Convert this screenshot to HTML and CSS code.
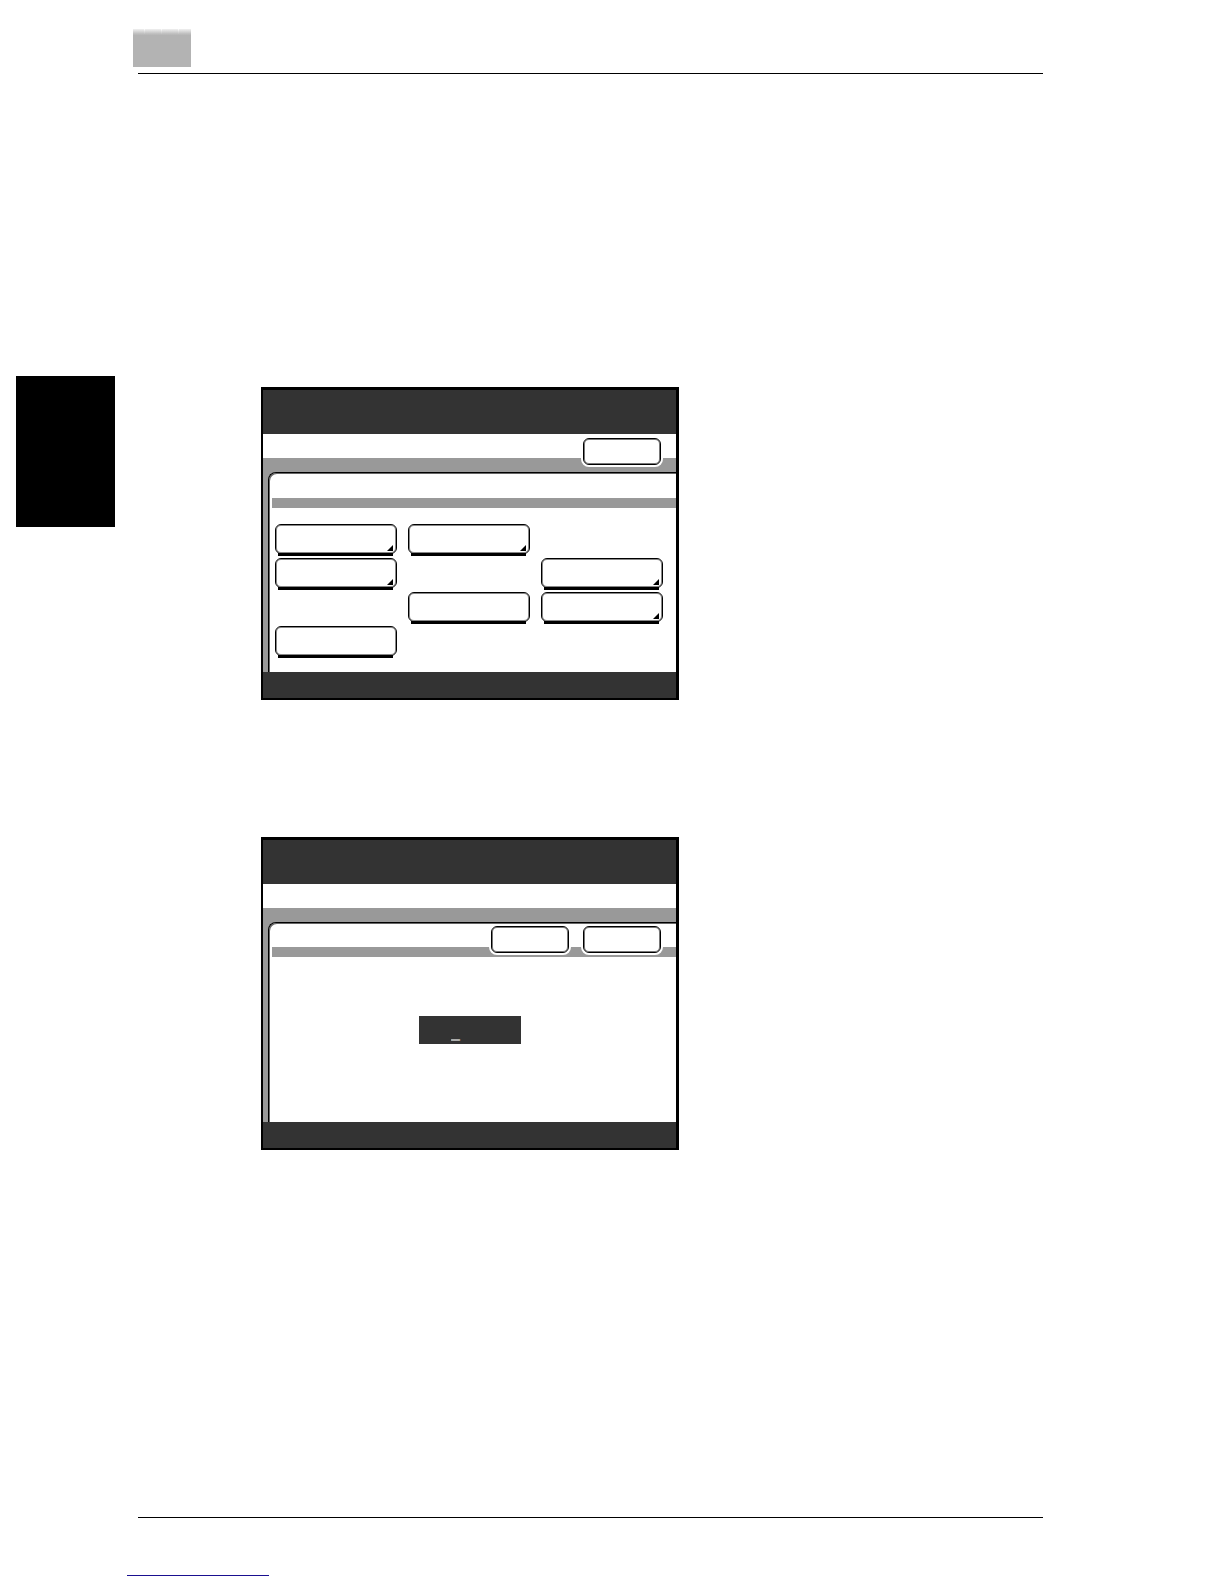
FILE: index.html
```html
<!DOCTYPE html>
<html lang="en">
<head>
<meta charset="utf-8">
<meta name="viewport" content="width=device-width, initial-scale=1">
<title>Manual page</title>
<link rel="stylesheet" href="styles.css">
</head>
<body>
<div class="page">
  <header class="page-header">
    <div class="chapter-mark"><i></i><i></i><i></i><i></i></div>
    <hr class="rule">
  </header>
  <main class="content">
    <aside class="side-tab"></aside>
    <div class="figures">
      <section class="device" aria-label="Settings menu">
        <div class="device-head"></div>
        <div class="title-row title-actions">
          <button class="btn" type="button" aria-label="Close"></button>
        </div>
        <div class="backdrop">
          <div class="sheet">
            <div class="sheet-title"></div>
            <div class="strip"></div>
            <div class="menu">
              <button class="key more c1 r1" type="button" aria-label="Option 1"></button>
              <button class="key more c2 r1" type="button" aria-label="Option 2"></button>
              <button class="key more c1 r2" type="button" aria-label="Option 3"></button>
              <button class="key more c3 r2" type="button" aria-label="Option 4"></button>
              <button class="key c2 r3" type="button" aria-label="Option 5"></button>
              <button class="key more c3 r3" type="button" aria-label="Option 6"></button>
              <button class="key c1 r4" type="button" aria-label="Option 7"></button>
            </div>
          </div>
        </div>
        <div class="device-foot"></div>
      </section>
      <section class="device" aria-label="Value entry">
        <div class="device-head"></div>
        <div class="title-row"></div>
        <div class="backdrop">
          <div class="sheet">
            <div class="sheet-title sheet-actions">
              <button class="btn" type="button" aria-label="Cancel"></button>
              <button class="btn" type="button" aria-label="Enter"></button>
            </div>
            <div class="strip"></div>
            <div class="entry">
              <input class="entry-field" type="text" value="_" aria-label="Value">
            </div>
          </div>
        </div>
        <div class="device-foot"></div>
      </section>
    </div>
  </main>
  <footer class="page-footer">
    <hr class="rule">
    <a class="footer-link" href="#" aria-label="Site"></a>
  </footer>
</div>
</body>
</html>
```
FILE: styles.css
```css
* {
  box-sizing: border-box;
}

body {
  margin: 0;
  background: #fff;
  font-family: "Liberation Sans", Arial, sans-serif;
}

.page {
  display: flex;
  flex-direction: column;
  min-height: 100vh;
}

.page-header {
  padding-top: 29px;
}

.chapter-mark {
  display: flex;
  gap: 1px;
  width: 58px;
  height: 38px;
  margin: 0 0 6px 133px;
  background: linear-gradient(#fff, #b3b3b3 6px);
}

.chapter-mark i {
  flex: 0 0 16px;
  height: 5px;
  background: linear-gradient(#f0f0f0, #bcbcbc);
}

.chapter-mark i:first-child {
  flex-basis: 11px;
}

.chapter-mark i:last-child {
  flex: 1;
}

.rule {
  height: 1px;
  margin: 0 181px 0 138px;
  border: 0;
  background: #000;
}

.content {
  display: flex;
  align-items: flex-start;
  gap: 146px;
  padding: 302px 16px 0;
}

.side-tab {
  flex: 0 0 99px;
  height: 151px;
  background: #000;
}

.figures {
  display: flex;
  flex: 1;
  flex-direction: column;
  gap: 137px;
  padding-top: 11px;
}

/* Touch-panel screen */
.device {
  display: flex;
  flex-direction: column;
  width: 100%;
  max-width: 418px;
  border: solid #000;
  border-width: 3px 3px 2px 2px;
}

.device-head {
  height: 44px;
  background: #333;
}

.device-foot {
  height: 26px;
  background: #333;
}

.title-row {
  display: flex;
  height: 24px;
  background: #fff;
}

.title-actions {
  justify-content: flex-end;
  padding: 4px 15px 0 0;
}

.backdrop {
  padding: 14px 0 0 5px;
  background: #999;
}

.sheet {
  min-height: 200px;
  border: solid #000;
  border-width: 1px 0 0 1px;
  border-top-left-radius: 8px;
  background: #fff;
  box-shadow: inset 1px 1px #666;
}

.sheet-title {
  display: flex;
  height: 25px;
}

.sheet-actions {
  justify-content: flex-end;
  gap: 14px;
  height: 24px;
  padding: 3px 15px 0 0;
}

.strip {
  height: 10px;
  margin-left: 3px;
  background: #999;
}

.btn {
  position: relative;
  flex: 0 0 78px;
  height: 27px;
  padding: 0;
  border: 1px solid #000;
  border-radius: 6px;
  background: #fff;
  box-shadow: inset 0 0 0 1px #777, 0 0 0 2px #fff;
}

.menu {
  display: grid;
  grid-template-columns: repeat(3, 122px);
  grid-auto-rows: 30px;
  gap: 4px 11px;
  padding: 16px 0 0 6px;
}

.key {
  position: relative;
  padding: 0;
  border: 1px solid #000;
  border-radius: 6px;
  background: #fff;
  box-shadow: inset 0 0 0 1px #888;
}

/* Raised lower edge of a key */
.key::before {
  content: "";
  position: absolute;
  right: 3px;
  bottom: -3px;
  left: 2px;
  height: 3px;
  background: #000;
}

.more::after {
  content: "";
  position: absolute;
  right: 3px;
  bottom: 2px;
  width: 6px;
  height: 6px;
  background: #000;
  clip-path: polygon(100% 0, 100% 100%, 0 100%);
}

.c1 { grid-column: 1; }
.c2 { grid-column: 2; }
.c3 { grid-column: 3; }
.r1 { grid-row: 1; }
.r2 { grid-row: 2; }
.r3 { grid-row: 3; }
.r4 { grid-row: 4; }

.entry {
  display: flex;
  justify-content: center;
  padding: 59px 5px 0 0;
}

.entry-field {
  width: 102px;
  height: 28px;
  padding: 6px 0 0 32px;
  border: 0;
  border-radius: 0;
  background: #333;
  color: #fff;
  font: bold 16px/22px "Liberation Sans", Arial, sans-serif;
  text-shadow: 0 1px #fff;
}

.page-footer {
  margin-top: auto;
  padding-bottom: 8px;
}

.footer-link {
  display: block;
  width: 142px;
  height: 58px;
  margin-left: 127px;
  border-bottom: 1px solid #1a1090;
}
```
